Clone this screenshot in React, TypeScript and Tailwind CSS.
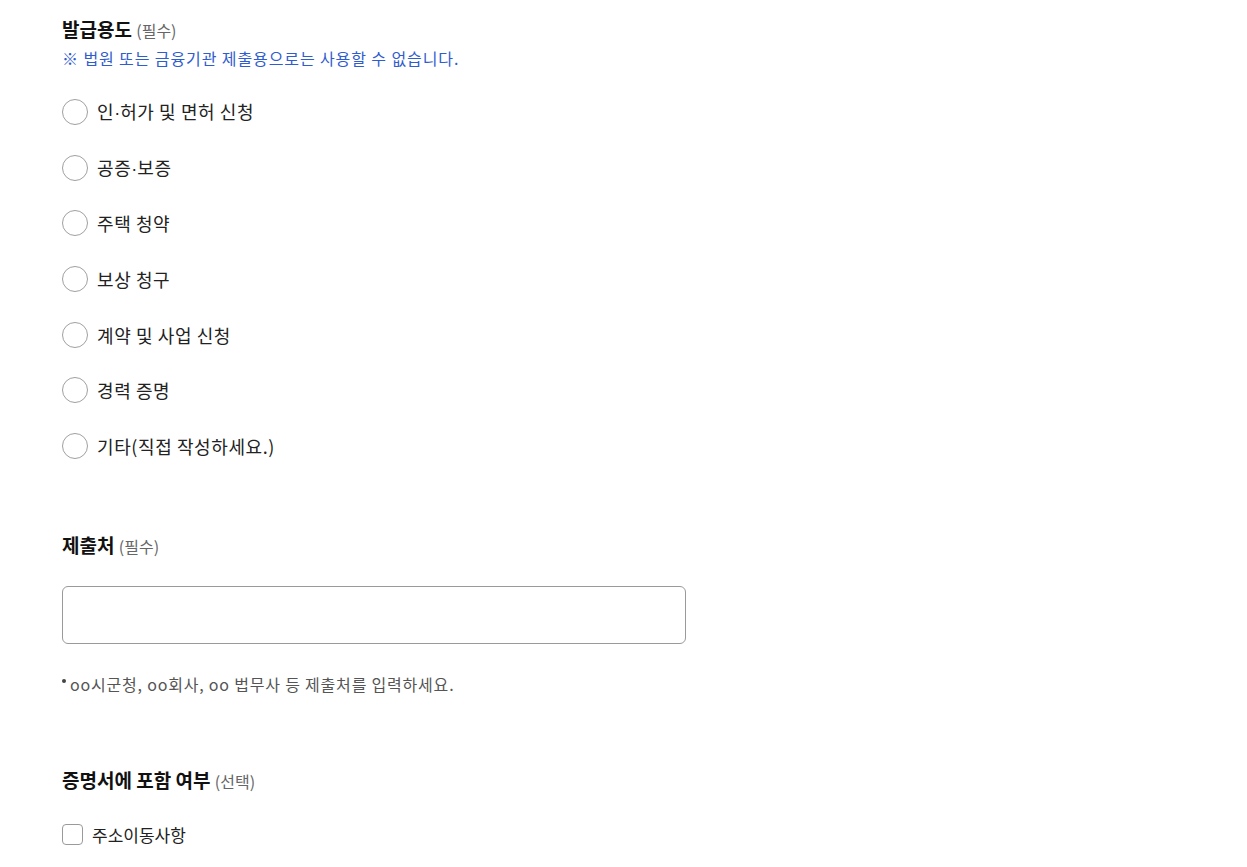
const options = [
  '인·허가 및 면허 신청',
  '공증·보증',
  '주택 청약',
  '보상 청구',
  '계약 및 사업 신청',
  '경력 증명',
  '기타(직접 작성하세요.)',
];

function SectionTitle({ title, note }: { title: string; note: string }) {
  return (
    <h3 className="text-[19px] leading-[28px] font-bold text-[#111]">
      {title} <span className="text-[16px] font-normal text-[#666]">{note}</span>
    </h3>
  );
}

// Noto CJK draws the middle dot full width; the reference has a narrow one
function OptionLabel({ text }: { text: string }) {
  const parts = text.split('·');
  return (
    <span className="text-[18px] leading-[24px] tracking-[0.6px]">
      {parts.map((part, i) => (
        <span key={i}>
          {i > 0 ? <span className="font-['Liberation_Sans'] tracking-normal">·</span> : null}
          {part}
        </span>
      ))}
    </span>
  );
}

export default function App() {
  return (
    <div
      className="min-h-screen bg-white px-[62px] pt-[15px] text-[#222]"
      style={{ fontFamily: '"Noto Sans CJK KR", "Noto Sans", sans-serif' }}
    >
      <SectionTitle title="발급용도" note="(필수)" />
      <p className="mt-[2px] text-[16px] leading-[24px] tracking-[0.9px] text-[#2f5ccf]">
        ※ 법원 또는 금융기관 제출용으로는 사용할 수 없습니다.
      </p>

      <div className="mt-[14px] flex flex-col">
        {options.map((label) => (
          <label key={label} className="flex h-[55.7px] items-center gap-[9px]">
            <span className="h-[26px] w-[26px] rounded-full border-[1.5px] border-[#a0a0a0] bg-white" />
            <OptionLabel text={label} />
          </label>
        ))}
      </div>

      <div className="mt-[57px]">
        <SectionTitle title="제출처" note="(필수)" />
      </div>
      <div className="mt-[26px] h-[58px] w-[624px] rounded-[6px] border border-[#9a9a9a]" />
      <p className="mt-[29px] flex items-center text-[16px] leading-[22px] tracking-[0.8px] text-[#555]">
        <span className="mr-[4px] -mt-[5px] h-[4px] w-[4px] rounded-full bg-[#444]" />
        oo시군청, oo회사, oo 법무사 등 제출처를 입력하세요.
      </p>

      <div className="mt-[71px]">
        <SectionTitle title="증명서에 포함 여부" note="(선택)" />
      </div>
      <label className="mt-[28px] flex h-[24px] items-center gap-[9px]">
        <span className="h-[21px] w-[21px] rounded-[4px] border-[1.5px] border-[#9a9a9a] bg-white" />
        <span className="text-[17px] leading-[24px]">주소이동사항</span>
      </label>
    </div>
  );
}
